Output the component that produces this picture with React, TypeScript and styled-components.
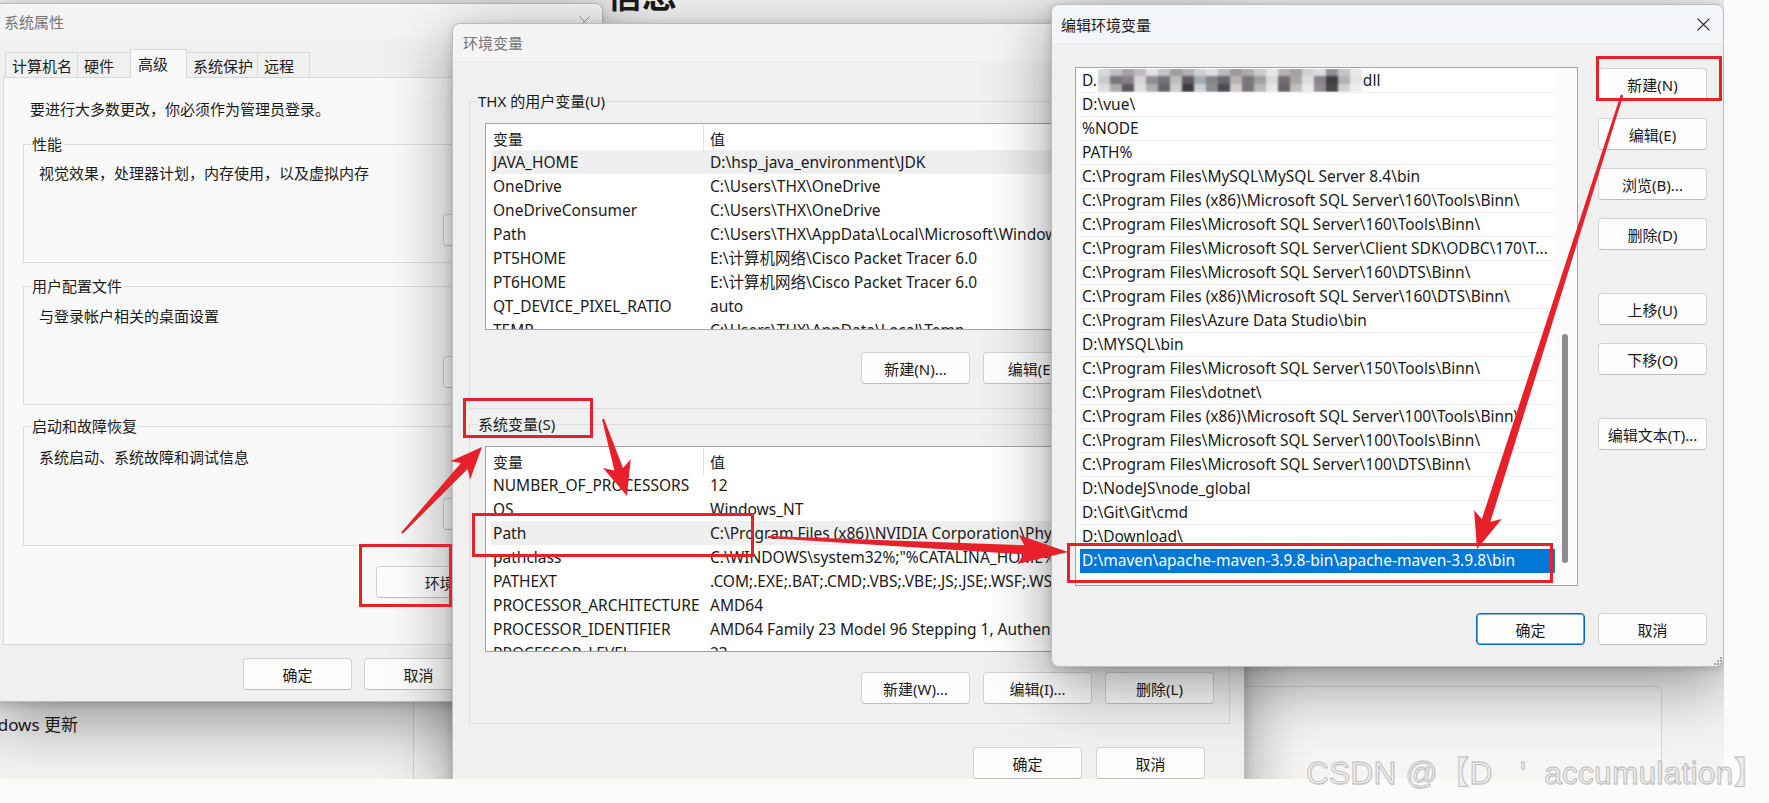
import React from "react";
import styled, { createGlobalStyle, css } from "styled-components";

const UI = `"Noto Sans", "Noto Sans CJK SC", sans-serif`;
const RED = "#e8202a";

const GlobalStyle = createGlobalStyle`
  * { box-sizing: border-box; }
  html, body { margin: 0; padding: 0; background: #fbfbfa; }
  body { font-family: ${UI}; color: #1a1a1a; }
`;

const Desktop = styled.div`
  position: relative;
  width: 1769px;
  height: 803px;
  overflow: hidden;
  background: #fbfbfa;
`;

const Screen = styled.div`
  position: relative;
  width: 1724px;
  height: 779px;
  overflow: hidden;
  background: #f3f3f3;
`;

/* ---------- background settings window ---------- */
const SettingsShell = styled.div`
  display: grid;
  grid-template-columns: 413px 1fr;
  height: 100%;
`;
const SettingsNav = styled.nav`
  padding-top: 713px;
  overflow: hidden;
`;
const NavItem = styled.div`
  font-size: 17px;
  line-height: 24px;
  margin-left: -33px;
  white-space: nowrap;
  color: #1b1b1b;
`;
const SettingsMain = styled.main`
  display: flex;
  flex-direction: column;
`;
const PageTitle = styled.div`
  margin: -25px 0 0 194px;
  height: 40px;
  font-size: 35px;
  line-height: 40px;
  font-weight: 600;
  color: #1b1b1b;
  white-space: nowrap;
`;
const SettingsCard = styled.div`
  margin: 671px 62px 0 0;
  height: 200px;
  border: 1px solid #d9d9d9;
  border-radius: 4px;
  background: #f5f5f5;
`;

/* ---------- windows ---------- */
type WinProps = { $x: number; $y: number; $w: number; $h: number; $z: number };
const Window = styled.div<WinProps>`
  position: absolute;
  left: ${(p) => p.$x}px;
  top: ${(p) => p.$y}px;
  width: ${(p) => p.$w}px;
  height: ${(p) => p.$h}px;
  z-index: ${(p) => p.$z};
  display: flex;
  flex-direction: column;
  background: #f0f0f0;
  border: 1px solid #bcbcbc;
  border-radius: 8px;
  overflow: hidden;
  box-shadow: 0 18px 64px rgba(0, 0, 0, 0.4), 0 2px 8px rgba(0, 0, 0, 0.16);
`;

const TitleBar = styled.div<{ $h: number; $pl: number; $active?: boolean }>`
  flex: none;
  height: ${(p) => p.$h}px;
  padding-left: ${(p) => p.$pl}px;
  display: flex;
  align-items: center;
  background: ${(p) => (p.$active ? "#f3f5f8" : "#f4f4f4")};
`;
const TitleText = styled.span<{ $active?: boolean }>`
  font-size: 15px;
  color: ${(p) => (p.$active ? "#1a1a1a" : "#757575")};
  white-space: nowrap;
`;
const CloseBox = styled.div<{ $w: number; $gray?: boolean }>`
  margin-left: auto;
  width: ${(p) => p.$w}px;
  height: 100%;
  display: flex;
  align-items: center;
  justify-content: center;
  color: ${(p) => (p.$gray ? "#8a8a8a" : "#1a1a1a")};
`;
const Close = ({ w, size, gray }: { w: number; size: number; gray?: boolean }) => (
  <CloseBox $w={w} $gray={gray}>
    <svg width={size} height={size} viewBox="0 0 10 10">
      <path d="M0.4 0.4 L9.6 9.6 M9.6 0.4 L0.4 9.6" stroke="currentColor" strokeWidth={0.85} fill="none" />
    </svg>
  </CloseBox>
);

const Button = styled.button<{ $w?: number; $primary?: boolean }>`
  flex: none;
  width: ${(p) => p.$w ?? 109}px;
  height: 32px;
  padding: 0;
  font-family: ${UI};
  font-size: 15px;
  color: #1a1a1a;
  background: #fdfdfd;
  border: 1px solid #d2d2d2;
  border-bottom-color: #bfbfbf;
  border-radius: 4px;
  white-space: nowrap;
  ${(p) =>
    p.$primary &&
    css`
      border: 1px solid #0067c0;
      box-shadow: inset 0 0 0 0.6px #0067c0;
    `}
`;

const ButtonRow = styled.div<{ $mt: number; $gap?: number; $pr?: number; $pl?: number; $start?: boolean }>`
  display: flex;
  justify-content: ${(p) => (p.$start ? "flex-start" : "flex-end")};
  gap: ${(p) => p.$gap ?? 13}px;
  margin-top: ${(p) => p.$mt}px;
  padding-right: ${(p) => p.$pr ?? 0}px;
  padding-left: ${(p) => p.$pl ?? 0}px;
`;

const Group = styled.fieldset<{ $mt: number }>`
  margin: ${(p) => p.$mt}px 0 0 0;
  padding: 0;
  border: 1px solid #dcdcdc;
  min-width: 0;
`;
const Legend = styled.legend`
  margin-left: 7px;
  padding: 0 1px;
  font-size: 15px;
  line-height: 20px;
  white-space: nowrap;
`;
const GroupInner = styled.div<{ $p: string }>`
  padding: ${(p) => p.$p};
  display: flex;
  flex-direction: column;
`;
const Text = styled.div<{ $indent?: number; $mt?: number }>`
  font-size: 15px;
  line-height: 20px;
  white-space: nowrap;
  padding-left: ${(p) => p.$indent ?? 0}px;
  margin-top: ${(p) => p.$mt ?? 0}px;
`;

/* ---------- dialog 1 : 系统属性 ---------- */
const SysBody = styled.div`
  padding: 10px 10px 0 10px;
  display: flex;
  flex-direction: column;
`;
const TabStrip = styled.div`
  display: flex;
  align-items: flex-end;
  height: 28px;
  margin-left: 3px;
  position: relative;
  z-index: 1;
`;
const Tab = styled.div<{ $w: number; $active?: boolean }>`
  width: ${(p) => p.$w}px;
  height: ${(p) => (p.$active ? 29 : 25)}px;
  margin-left: -1px;
  margin-bottom: ${(p) => (p.$active ? -1 : 0)}px;
  padding-left: ${(p) => (p.$active ? 7 : 6)}px;
  padding-bottom: ${(p) => (p.$active ? 2 : 0)}px;
  display: flex;
  align-items: center;
  font-size: 15px;
  white-space: nowrap;
  border: 1px solid #d9d9d9;
  border-bottom: none;
  background: ${(p) => (p.$active ? "#f9f9f9" : "#f0f0f0")};
`;
const TabPanel = styled.div`
  height: 568px;
  padding: 0 19px;
  display: flex;
  flex-direction: column;
  border: 1px solid #d9d9d9;
  background: #f9f9f9;
`;

/* ---------- dialog 2 : 环境变量 ---------- */
const EnvBody = styled.div`
  padding: 0 14px 0 16px;
  display: flex;
  flex-direction: column;
`;
const ListView = styled.div<{ $h: number }>`
  height: ${(p) => p.$h}px;
  border: 1px solid #a3a3a3;
  background: #ffffff;
  overflow: hidden;
`;
const LVHead = styled.div`
  display: grid;
  grid-template-columns: 218px 1fr;
  height: 26px;
`;
const LVHeadCell = styled.div<{ $divider?: boolean }>`
  padding-left: ${(p) => (p.$divider ? 7 : 6)}px;
  font-size: 15px;
  line-height: 28px;
  border-right: ${(p) => (p.$divider ? "1px solid #e3e3e3" : "none")};
  margin-top: 1px;
`;
const LVRow = styled.div<{ $sel?: boolean }>`
  display: grid;
  grid-template-columns: 217px 1fr;
  height: 24px;
  margin-left: 5px;
  line-height: 24px;
  font-size: 15.5px;
  white-space: nowrap;
  background: ${(p) => (p.$sel ? "#efefef" : "transparent")};
`;
const LVCell = styled.div`
  padding-left: 2px;
  overflow: hidden;
`;

/* ---------- dialog 3 : 编辑环境变量 ---------- */
const EditBody = styled.div`
  padding: 24px 16px 0 23px;
  display: grid;
  grid-template-columns: 503px 109px;
  column-gap: 20px;
  align-items: start;
`;
const PathList = styled.div`
  height: 519px;
  display: flex;
  border: 1px solid #a3a3a3;
  background: #ffffff;
  overflow: hidden;
`;
const PathRows = styled.div`
  width: 479px;
  flex: none;
  padding-top: 1px;
  display: flex;
  flex-direction: column;
`;
const PathRow = styled.div<{ $sel?: boolean }>`
  flex: none;
  height: 24px;
  margin-left: 4px;
  padding-left: 2px;
  line-height: 23px;
  font-size: 15.5px;
  white-space: nowrap;
  overflow: hidden;
  border-bottom: 1px solid #efefef;
  ${(p) =>
    p.$sel &&
    css`
      background: #0078d7;
      color: #ffffff;
      border-bottom-color: #0078d7;
    `}
`;
const ScrollLane = styled.div`
  flex: 1;
  padding: 266px 0 0 7px;
  background: #fbfbfb;
`;
const Thumb = styled.div`
  width: 6px;
  height: 229px;
  border-radius: 3px;
  background: #8b8b8b;
`;
const SideButtons = styled.div`
  display: flex;
  flex-direction: column;
  padding-top: 1px;
`;
const SideButton = styled(Button)<{ $mt: number }>`
  margin-top: ${(p) => p.$mt}px;
`;
const EditFooter = styled(ButtonRow)`
  grid-column: 1 / span 2;
`;
const Mosaic = styled.span`
  display: inline-grid;
  grid-template-columns: repeat(22, 12px);
  grid-auto-rows: 8px;
  vertical-align: middle;
  margin: -3px 1px 0 1px;
  filter: blur(1px);
`;
const MosaicCell = styled.span<{ $c: string }>`
  background: ${(p) => p.$c};
`;
const Grip = styled.svg`
  position: absolute;
  right: 1px;
  bottom: 1px;
`;

/* ---------- annotations ---------- */
const Overlay = styled.svg`
  position: absolute;
  left: 0;
  top: 0;
  z-index: 10;
  pointer-events: none;
`;
const Watermark = styled.div`
  position: absolute;
  left: 1306px;
  top: 755px;
  z-index: 20;
  font-family: "Liberation Sans", "Noto Sans CJK SC", sans-serif;
  font-size: 31.5px;
  line-height: 36px;
  letter-spacing: 0.3px;
  white-space: pre;
  color: #eeeeee;
  -webkit-text-stroke: 0.8px #b9b9b9;
  text-shadow: 1px 1px 1px rgba(0, 0, 0, 0.1);
`;

function arrowPts(x0: number, y0: number, x1: number, y1: number, tail = 2, neck = 9, headLen = 30, headW = 26) {
  const dx = x1 - x0;
  const dy = y1 - y0;
  const L = Math.hypot(dx, dy);
  const ux = dx / L;
  const uy = dy / L;
  const px = -uy;
  const py = ux;
  const bx = x1 - ux * headLen;
  const by = y1 - uy * headLen;
  const nx = bx + ux * 6;
  const ny = by + uy * 6;
  const pts = [
    [x0 + (px * tail) / 2, y0 + (py * tail) / 2],
    [nx + (px * neck) / 2, ny + (py * neck) / 2],
    [bx + (px * headW) / 2, by + (py * headW) / 2],
    [x1, y1],
    [bx - (px * headW) / 2, by - (py * headW) / 2],
    [nx - (px * neck) / 2, ny - (py * neck) / 2],
    [x0 - (px * tail) / 2, y0 - (py * tail) / 2],
  ];
  return pts.map((p) => p.map((v) => v.toFixed(1)).join(",")).join(" ");
}

const userVars: [string, string][] = [
  ["JAVA_HOME", "D:\\hsp_java_environment\\JDK"],
  ["OneDrive", "C:\\Users\\THX\\OneDrive"],
  ["OneDriveConsumer", "C:\\Users\\THX\\OneDrive"],
  ["Path", "C:\\Users\\THX\\AppData\\Local\\Microsoft\\WindowsApps;"],
  ["PT5HOME", "E:\\计算机网络\\Cisco Packet Tracer 6.0"],
  ["PT6HOME", "E:\\计算机网络\\Cisco Packet Tracer 6.0"],
  ["QT_DEVICE_PIXEL_RATIO", "auto"],
  ["TEMP", "C:\\Users\\THX\\AppData\\Local\\Temp"],
];

const sysVars: [string, string][] = [
  ["NUMBER_OF_PROCESSORS", "12"],
  ["OS", "Windows_NT"],
  ["Path", "C:\\Program Files (x86)\\NVIDIA Corporation\\PhysX\\Common;"],
  ["pathclass", "C:\\WINDOWS\\system32%;\"%CATALINA_HOME%\\lib"],
  ["PATHEXT", ".COM;.EXE;.BAT;.CMD;.VBS;.VBE;.JS;.JSE;.WSF;.WSH;.MSC"],
  ["PROCESSOR_ARCHITECTURE", "AMD64"],
  ["PROCESSOR_IDENTIFIER", "AMD64 Family 23 Model 96 Stepping 1, AuthenticAMD"],
  ["PROCESSOR_LEVEL", "23"],
];

const paths = [
  "D:\\vue\\",
  "%NODE",
  "PATH%",
  "C:\\Program Files\\MySQL\\MySQL Server 8.4\\bin",
  "C:\\Program Files (x86)\\Microsoft SQL Server\\160\\Tools\\Binn\\",
  "C:\\Program Files\\Microsoft SQL Server\\160\\Tools\\Binn\\",
  "C:\\Program Files\\Microsoft SQL Server\\Client SDK\\ODBC\\170\\T...",
  "C:\\Program Files\\Microsoft SQL Server\\160\\DTS\\Binn\\",
  "C:\\Program Files (x86)\\Microsoft SQL Server\\160\\DTS\\Binn\\",
  "C:\\Program Files\\Azure Data Studio\\bin",
  "D:\\MYSQL\\bin",
  "C:\\Program Files\\Microsoft SQL Server\\150\\Tools\\Binn\\",
  "C:\\Program Files\\dotnet\\",
  "C:\\Program Files (x86)\\Microsoft SQL Server\\100\\Tools\\Binn\\",
  "C:\\Program Files\\Microsoft SQL Server\\100\\Tools\\Binn\\",
  "C:\\Program Files\\Microsoft SQL Server\\100\\DTS\\Binn\\",
  "D:\\NodeJS\\node_global",
  "D:\\Git\\Git\\cmd",
  "D:\\Download\\",
];

const mosaicColors = [
  "#d8d8d8", "#c2c0c4", "#a5a2a7", "#bdb9be", "#e2e2e2", "#c6c6c6", "#9e9a9f", "#b3b0b4", "#cfcfcf", "#dde0e2", "#bababa",
  "#9c999e", "#aeacaf", "#cbcbcb", "#e6e6e6", "#b6b2b4", "#a2a0a2", "#d2d2d2", "#dcdcdc", "#939195", "#c4c4c4", "#e8e8e8",
  "#c9c9c9", "#77747a", "#86828a", "#d5d5d5", "#8f8d91", "#747276", "#bcbcbc", "#5c5a5f", "#a3adb3", "#858387", "#69676b",
  "#b8b4b1", "#777579", "#a0a0a0", "#dadada", "#706e74", "#aaa6a2", "#dedede", "#848286", "#3f3d41", "#b2b2b2", "#e3e3e3",
  "#dcdcdc", "#aeacb0", "#5a585e", "#e0e0e0", "#b0aeb2", "#666668", "#cecece", "#3e3c42", "#cbd1d5", "#8e8c90", "#4c4a4f",
  "#d2cecc", "#767478", "#b8b8b8", "#e6e6e6", "#666467", "#c3c0bc", "#ececec", "#8f8d90", "#48464a", "#d0d0d0", "#eeeeee",
];

export default function App() {
  return (
    <Desktop>
      <GlobalStyle />
      <Screen>
        <SettingsShell>
          <SettingsNav>
            <NavItem>Windows 更新</NavItem>
          </SettingsNav>
          <SettingsMain>
            <PageTitle>信息</PageTitle>
            <SettingsCard />
          </SettingsMain>
        </SettingsShell>

        {/* 系统属性 */}
        <Window $x={-8} $y={3} $w={611} $h={699} $z={1}>
          <TitleBar $h={35} $pl={11}>
            <TitleText>系统属性</TitleText>
            <Close w={36} size={11} gray />
          </TitleBar>
          <SysBody>
            <TabStrip>
              <Tab $w={73}>计算机名</Tab>
              <Tab $w={54}>硬件</Tab>
              <Tab $w={57} $active>高级</Tab>
              <Tab $w={72}>系统保护</Tab>
              <Tab $w={53}>远程</Tab>
            </TabStrip>
            <TabPanel>
              <Text $indent={7} $mt={21}>要进行大多数更改，你必须作为管理员登录。</Text>
              <Group $mt={15}>
                <Legend>性能</Legend>
                <GroupInner $p="9px 19px 16px 15px">
                  <Text>视觉效果，处理器计划，内存使用，以及虚拟内存</Text>
                  <ButtonRow $mt={31}>
                    <Button>设置(S)...</Button>
                  </ButtonRow>
                </GroupInner>
              </Group>
              <Group $mt={13}>
                <Legend>用户配置文件</Legend>
                <GroupInner $p="10px 19px 16px 15px">
                  <Text>与登录帐户相关的桌面设置</Text>
                  <ButtonRow $mt={30}>
                    <Button>设置(E)...</Button>
                  </ButtonRow>
                </GroupInner>
              </Group>
              <Group $mt={11}>
                <Legend>启动和故障恢复</Legend>
                <GroupInner $p="11px 19px 15px 15px">
                  <Text>系统启动、系统故障和调试信息</Text>
                  <ButtonRow $mt={31}>
                    <Button>设置(T)...</Button>
                  </ButtonRow>
                </GroupInner>
              </Group>
              <ButtonRow $mt={20} $pr={6}>
                <Button $w={190}>环境变量(N)...</Button>
              </ButtonRow>
            </TabPanel>
            <ButtonRow $mt={13} $start $pl={240} $gap={12}>
              <Button>确定</Button>
              <Button>取消</Button>
              <Button>应用(A)</Button>
            </ButtonRow>
          </SysBody>
        </Window>

        {/* 环境变量 */}
        <Window $x={452} $y={23} $w={793} $h={790} $z={2}>
          <TitleBar $h={37} $pl={10}>
            <TitleText>环境变量</TitleText>
          </TitleBar>
          <EnvBody>
            <Group $mt={30}>
              <Legend>THX 的用户变量(U)</Legend>
              <GroupInner $p="12px 15px 24px 15px">
                <ListView $h={207}>
                  <LVHead>
                    <LVHeadCell $divider>变量</LVHeadCell>
                    <LVHeadCell>值</LVHeadCell>
                  </LVHead>
                  {userVars.map(([k, v], i) => (
                    <LVRow key={k + i} $sel={i === 0}>
                      <LVCell>{k}</LVCell>
                      <LVCell>{v}</LVCell>
                    </LVRow>
                  ))}
                </ListView>
                <ButtonRow $mt={22}>
                  <Button>新建(N)...</Button>
                  <Button>编辑(E)...</Button>
                  <Button>删除(D)</Button>
                </ButtonRow>
              </GroupInner>
            </Group>
            <Group $mt={5}>
              <Legend>系统变量(S)</Legend>
              <GroupInner $p="12px 15px 19px 15px">
                <ListView $h={206}>
                  <LVHead>
                    <LVHeadCell $divider>变量</LVHeadCell>
                    <LVHeadCell>值</LVHeadCell>
                  </LVHead>
                  {sysVars.map(([k, v], i) => (
                    <LVRow key={k + i} $sel={i === 2}>
                      <LVCell>{k}</LVCell>
                      <LVCell>{v}</LVCell>
                    </LVRow>
                  ))}
                </ListView>
                <ButtonRow $mt={20}>
                  <Button>新建(W)...</Button>
                  <Button>编辑(I)...</Button>
                  <Button>删除(L)</Button>
                </ButtonRow>
              </GroupInner>
            </Group>
            <ButtonRow $mt={23} $pr={25} $gap={14}>
              <Button>确定</Button>
              <Button>取消</Button>
            </ButtonRow>
          </EnvBody>
        </Window>

        {/* 编辑环境变量 */}
        <Window $x={1051} $y={4} $w={673} $h={663} $z={3}>
          <TitleBar $h={38} $pl={9} $active>
            <TitleText $active>编辑环境变量</TitleText>
            <Close w={40} size={13} />
          </TitleBar>
          <EditBody>
            <PathList>
              <PathRows>
                <PathRow>
                  D.
                  <Mosaic>
                    {mosaicColors.map((c, i) => (
                      <MosaicCell key={i} $c={c} />
                    ))}
                  </Mosaic>
                  dll
                </PathRow>
                {paths.map((p, i) => (
                  <PathRow key={i}>{p}</PathRow>
                ))}
                <PathRow $sel>D:\maven\apache-maven-3.9.8-bin\apache-maven-3.9.8\bin</PathRow>
              </PathRows>
              <ScrollLane>
                <Thumb />
              </ScrollLane>
            </PathList>
            <SideButtons>
              <SideButton $mt={0}>新建(N)</SideButton>
              <SideButton $mt={18}>编辑(E)</SideButton>
              <SideButton $mt={18}>浏览(B)...</SideButton>
              <SideButton $mt={18}>删除(D)</SideButton>
              <SideButton $mt={43}>上移(U)</SideButton>
              <SideButton $mt={18}>下移(O)</SideButton>
              <SideButton $mt={43}>编辑文本(T)...</SideButton>
            </SideButtons>
            <EditFooter $mt={27} $gap={13}>
              <Button $primary>确定</Button>
              <Button>取消</Button>
            </EditFooter>
          </EditBody>
          <Grip width="8" height="8" viewBox="0 0 8 8">
            <g fill="#a0a0a0">
              <rect x="6" y="0" width="2" height="2" />
              <rect x="3" y="3" width="2" height="2" />
              <rect x="6" y="3" width="2" height="2" />
              <rect x="0" y="6" width="2" height="2" />
              <rect x="3" y="6" width="2" height="2" />
              <rect x="6" y="6" width="2" height="2" />
            </g>
          </Grip>
        </Window>

        <Overlay width="1724" height="779" viewBox="0 0 1724 779">
          <g fill="none" stroke={RED} strokeWidth={3}>
            <rect x={360.5} y={545.5} width={90} height={60} />
            <rect x={464.5} y={399.5} width={127} height={37} />
            <rect x={473.5} y={514.5} width={279} height={41} />
            <rect x={1068.5} y={544.5} width={483} height={37} />
            <rect x={1597.5} y={57.5} width={123} height={42} />
          </g>
          <g fill={RED}>
            <polygon points={arrowPts(402, 533, 482, 447, 2, 9, 32, 27)} />
            <polygon points={arrowPts(603, 419, 627, 496, 2, 9, 34, 29)} />
            <polygon points={arrowPts(768, 537, 1068, 552, 2, 9, 50, 29)} />
            <polygon points={arrowPts(1622, 95, 1477, 549, 2.5, 9, 36, 29)} />
          </g>
        </Overlay>
      </Screen>
      <Watermark>{"CSDN @【D   '  accumulation】"}</Watermark>
    </Desktop>
  );
}
